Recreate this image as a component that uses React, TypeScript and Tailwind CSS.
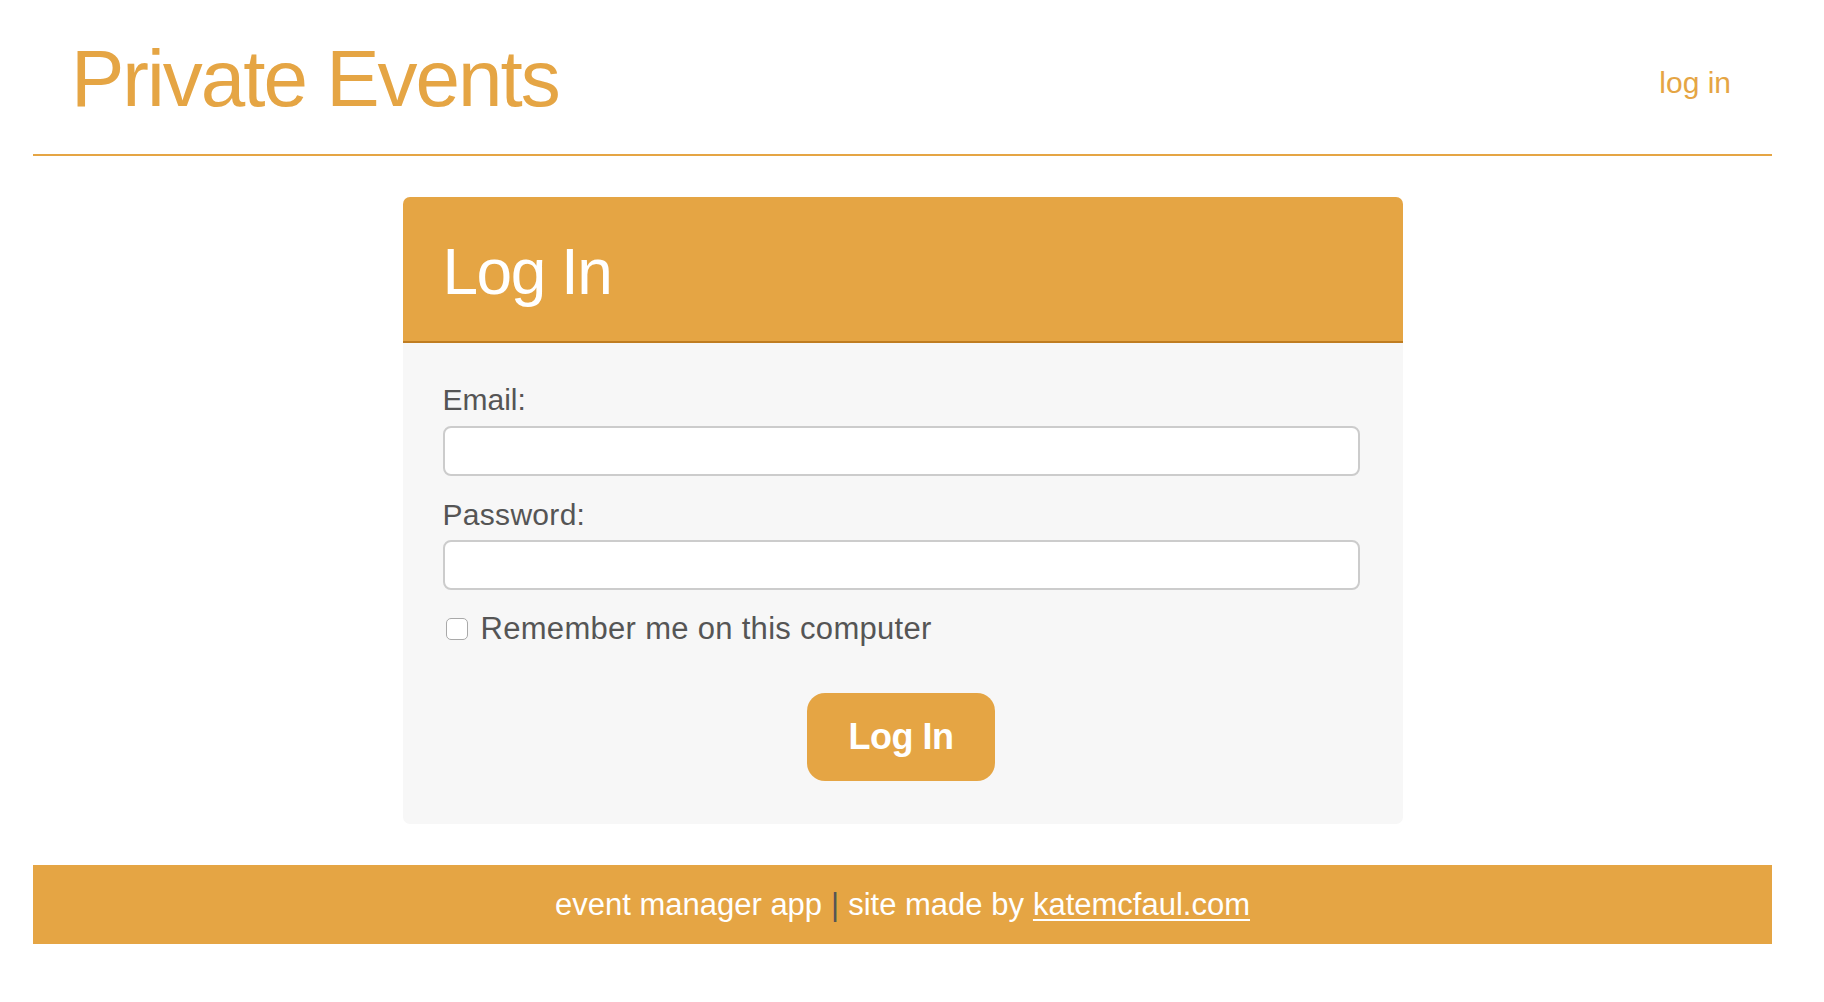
import React from 'react';

function App() {
  return (
    <div className="min-h-screen bg-white font-['Liberation_Sans',Arial,sans-serif]">
      <div className="w-[1805px] px-[33px]">
        {/* Header */}
        <header className="flex justify-between items-start border-b-2 border-[#e5a544] pl-[38px] pr-[41px] h-[156px]">
          <h1 className="pt-[39px] text-[80px] leading-[80px] tracking-[-2px] text-[#e5a544]">
            Private Events
          </h1>
          <a href="#" className="mt-[68px] text-[30px] leading-[30px] text-[#e5a544]">
            log in
          </a>
        </header>

        {/* Login card */}
        <div className="w-[1000px] mx-auto mt-[41px] rounded-[7px] bg-[#f7f7f7] overflow-hidden">
          <div className="bg-[#e5a544] border-b-2 border-[#bf7d22] px-[40px] pt-[43px] pb-[37px]">
            <h2 className="text-[64px] leading-[64px] tracking-[-1.5px] text-white">Log In</h2>
          </div>
          <form className="pl-[40px] pr-[43px] pt-[42px] pb-[43px]" onSubmit={(e) => e.preventDefault()}>
            <label className="block text-[30px] leading-[30px] text-[#555]">Email:</label>
            <input
              type="email"
              className="block w-full h-[50px] mt-[11px] rounded-[8px] border-2 border-[#cccccc] bg-white"
            />
            <label className="block mt-[24px] text-[30px] leading-[30px] tracking-[0.3px] text-[#555]">Password:</label>
            <input
              type="password"
              className="block w-full h-[50px] mt-[10px] rounded-[8px] border-2 border-[#cccccc] bg-white"
            />
            <div className="flex items-center gap-[13px] mt-[24px] pl-[3px]">
              <span className="w-[22px] h-[22px] rounded-[5px] border border-[#a9a9a9] bg-white" />
              <span className="text-[31px] leading-[30px] tracking-[0.3px] text-[#555]">Remember me on this computer</span>
            </div>
            <div className="flex justify-center mt-[49px]">
              <button
                type="submit"
                className="w-[188px] h-[88px] rounded-[18px] bg-[#e5a544] text-white text-[36px] font-bold tracking-[-0.5px]"
              >
                Log In
              </button>
            </div>
          </form>
        </div>

        {/* Footer */}
        <footer className="mt-[41px] h-[79px] bg-[#e5a544] flex items-center justify-center pt-[2px] text-[31px] text-white">
          <span>event manager app</span>
          <span className="mx-[9px] text-[#555]">|</span>
          <span>site made by</span>
          <a href="#" className="ml-[9px] underline underline-offset-[4px] decoration-[2px]">
            katemcfaul.com
          </a>
        </footer>
      </div>
    </div>
  );
}

export default App;
